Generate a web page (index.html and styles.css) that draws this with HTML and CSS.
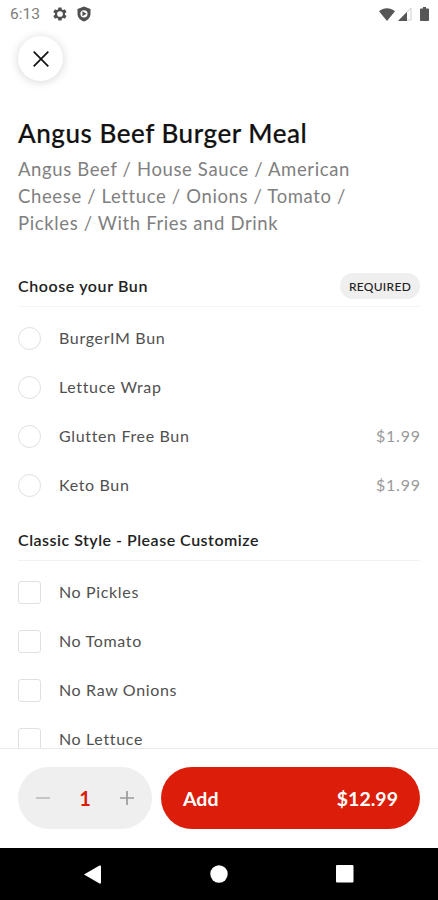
FILE: index.html
```html
<!DOCTYPE html>
<html lang="en">
<head>
<meta charset="utf-8">
<title>Angus Beef Burger Meal</title>
<link rel="stylesheet" href="styles.css">
</head>
<body>
<div class="phone">
  <header class="status">
    <span class="time">6:13</span>
    <svg class="gear" viewBox="0 0 24 24" width="16" height="16"><path fill-rule="evenodd" d="M19.4 13c0-.3.1-.6.1-1s0-.7-.1-1l2.1-1.600c.2-.2.3-.4.1-.7l-2-3.400c-.1-.2-.4-.3-.6-.2l-2.500 1a7 7 0 0 0-1.700-1l-.4-2.600c0-.3-.2-.4-.5-.4h-4c-.2 0-.4.200-.5.400l-.4 2.600a8 8 0 0 0-1.700 1l-2.500-1c-.2-.1-.5 0-.6.2l-2 3.400c-.1.300-.1.500.1.700L4.500 11a8 8 0 0 0 0 2l-2.200 1.600c-.2.200-.2.400-.1.700l2 3.400c.1.200.4.300.6.200l2.500-1a7 7 0 0 0 1.700 1l.4 2.600c0 .3.200.4.500.4h4c.3 0 .5-.2.500-.4l.4-2.600a8 8 0 0 0 1.700-1l2.500 1c.2.100.5 0 .6-.2l2-3.400c.1-.3.100-.5-.1-.7zM12 16.300a4.300 4.300 0 1 1 0-8.600 4.300 4.300 0 0 1 0 8.600z"/></svg>
    <svg class="shield" viewBox="0 0 14 16" width="14" height="16"><path fill-rule="evenodd" d="M7 .5 13.500 3v4.500c0 4-2.700 6.800-6.500 8-3.800-1.200-6.500-4-6.500-8V3zM7 4.200a3.600 3.600 0 1 0 0 7.200 3.600 3.600 0 0 0 0-7.200z"/><path d="M5.400 5.300v5l4.200-2.500z"/></svg>
    <span class="spacer"></span>
    <svg class="wifi" viewBox="0 0 16 13" width="16" height="13"><path d="M0 3.200C4.800-.8 11.200-.8 16 3.200L8 13z"/></svg>
    <svg class="signal" viewBox="0 0 14 14" width="14" height="14"><path class="dim" d="M13 1v12H1z"/><path d="M0 14 9 5v9z"/></svg>
    <svg class="battery" viewBox="0 0 9 14" width="9" height="14"><path d="M3 0h3v1.500h2.200c.5 0 .8.300.8.800v10.900c0 .5-.3.800-.8.800H.8c-.5 0-.8-.3-.8-.8V2.300c0-.5.300-.8.800-.8H3z"/></svg>
  </header>
  <main class="content">
    <button class="close" aria-label="Close"><svg viewBox="0 0 16 16" width="16" height="16"><path d="M.7.700l14.600 14.600M15.300.700.700 15.300"/></svg></button>
    <h1>Angus Beef Burger Meal</h1>
    <p class="desc">Angus Beef / House Sauce / American<br>Cheese / Lettuce / Onions / Tomato /<br>Pickles / With Fries and Drink</p>
    <section class="group bun">
      <div class="head"><h2>Choose your Bun</h2><span class="badge">REQUIRED</span></div>
      <div class="row"><i class="radio"></i><span class="label">BurgerIM Bun</span></div>
      <div class="row"><i class="radio"></i><span class="label">Lettuce Wrap</span></div>
      <div class="row"><i class="radio"></i><span class="label">Glutten Free Bun</span><span class="price">$1.99</span></div>
      <div class="row"><i class="radio"></i><span class="label">Keto Bun</span><span class="price">$1.99</span></div>
    </section>
    <section class="group style">
      <div class="head"><h2>Classic Style - Please Customize</h2></div>
      <div class="row"><i class="check"></i><span class="label">No Pickles</span></div>
      <div class="row"><i class="check"></i><span class="label">No Tomato</span></div>
      <div class="row"><i class="check"></i><span class="label">No Raw Onions</span></div>
      <div class="row"><i class="check"></i><span class="label">No Lettuce</span></div>
    </section>
  </main>
  <footer class="bar">
    <div class="stepper">
      <svg class="minus" viewBox="0 0 14 14" width="14" height="14"><path d="M0 7h14"/></svg>
      <span class="qty">1</span>
      <svg class="plus" viewBox="0 0 14 14" width="14" height="14"><path d="M0 7h14M7 0v14"/></svg>
    </div>
    <button class="add"><span>Add</span><span class="total">$12.99</span></button>
  </footer>
  <nav class="nav">
    <svg viewBox="0 0 17 19" width="17" height="19"><path d="M0 9.500 15.500.500Q17 0 17 1.500v16q0 1.500-1.500 1z"/></svg>
    <svg viewBox="0 0 18 18" width="18" height="18"><circle cx="9" cy="9" r="8.700"/></svg>
    <svg viewBox="0 0 18 18" width="18" height="18"><rect width="17.500" height="17.500" rx="1"/></svg>
  </nav>
</div>
</body>
</html>
```
FILE: styles.css
```css
* { box-sizing: border-box; }
body { margin: 0; background: #fff; font-family: Lato, "Liberation Sans", sans-serif; }
button { border: 0; padding: 0; font: inherit; }
svg { display: block; flex: none; }

.phone { width: 438px; height: 900px; display: flex; flex-direction: column; overflow: hidden; background: #fff; }

.status { flex: none; height: 28px; display: flex; align-items: center; padding: 0 9px 0 10px; fill: #565656; }
.time { width: 30px; font: 400 15.500px/29px Roboto, sans-serif; color: #7d7d7d; white-space: nowrap; }
.gear { margin-left: 12px; }
.shield { margin-left: 9px; }
.shield, .gear { fill: #505050; }
.spacer { flex: 1; }
.wifi { margin-right: 1px; }
.signal { margin-left: 2px; }
.signal .dim { fill: #fff; stroke: #cfcfcf; }
.battery { margin-left: 8px; }

.content { flex: 1; min-height: 0; overflow: hidden; padding: 8px 18px 0; }
.close { width: 45px; height: 45px; border-radius: 50%; background: #fff; box-shadow: 0 1px 10px rgba(0, 0, 0, .17); display: flex; align-items: center; justify-content: center; }
.close svg { fill: none; stroke: #111; stroke-width: 1.700; }

h1 { margin: 36px 0 0; font-size: 26px; line-height: 32px; font-weight: 500; letter-spacing: .54px; color: #111; -webkit-text-stroke: .2px #111; white-space: nowrap; }
.desc { margin: 7px 0 0; font-size: 18.500px; line-height: 27px; letter-spacing: .63px; color: #808080; white-space: nowrap; }

.group .head { height: 41px; display: flex; align-items: center; justify-content: space-between; border-bottom: 1px solid #f1f1f1; padding-bottom: 1px; margin-bottom: 7px; }
.bun { margin-top: 29px; }
.bun .head { border-color: #f5f5f5; }
.style { margin-top: 10px; }
h2 { margin: 0; font-size: 16px; font-weight: 600; letter-spacing: .5px; color: #222; white-space: nowrap; }
.bun h2 { letter-spacing: .6px; }
.badge { width: 80px; height: 26px; border-radius: 13px; background: #efefef; text-align: center; font-size: 12px; line-height: 27px; font-weight: 500; letter-spacing: .3px; color: #222; }
.row { height: 49px; display: flex; align-items: center; }
.radio, .check { flex: none; width: 23px; height: 23px; border: 1.500px solid #e0e0e0; }
.radio { border-radius: 50%; }
.check { border-radius: 3px; }
.label, .price { padding-bottom: 3px; font-size: 16px; letter-spacing: .65px; }
.label { margin-left: 18px; flex: 1; color: #505050; }
.price { color: #999; letter-spacing: .8px; margin-right: -.8px; }

.bar { flex: none; height: 100px; border-top: 1px solid #e9e9e9; padding: 18px 18px 0; display: flex; gap: 9px; background: #fff; }
.stepper { width: 134px; height: 62px; border-radius: 31px; background: #efefef; display: flex; align-items: center; justify-content: space-between; padding: 0 18px; fill: none; stroke-width: 1.700; }
.minus { stroke: #bdbdbd; }
.plus { stroke: #9a9a9a; }
.qty { font-size: 20px; font-weight: 700; color: #db1c0b; }
.add { flex: 1; height: 62px; border-radius: 31px; background: #db1d09; color: #fff; padding: 0 22px; display: flex; align-items: center; justify-content: space-between; font-size: 19.500px; font-weight: 700; }

.nav { flex: none; height: 52px; background: #000; display: flex; align-items: center; justify-content: center; gap: 108.500px; fill: #fff; }
```
